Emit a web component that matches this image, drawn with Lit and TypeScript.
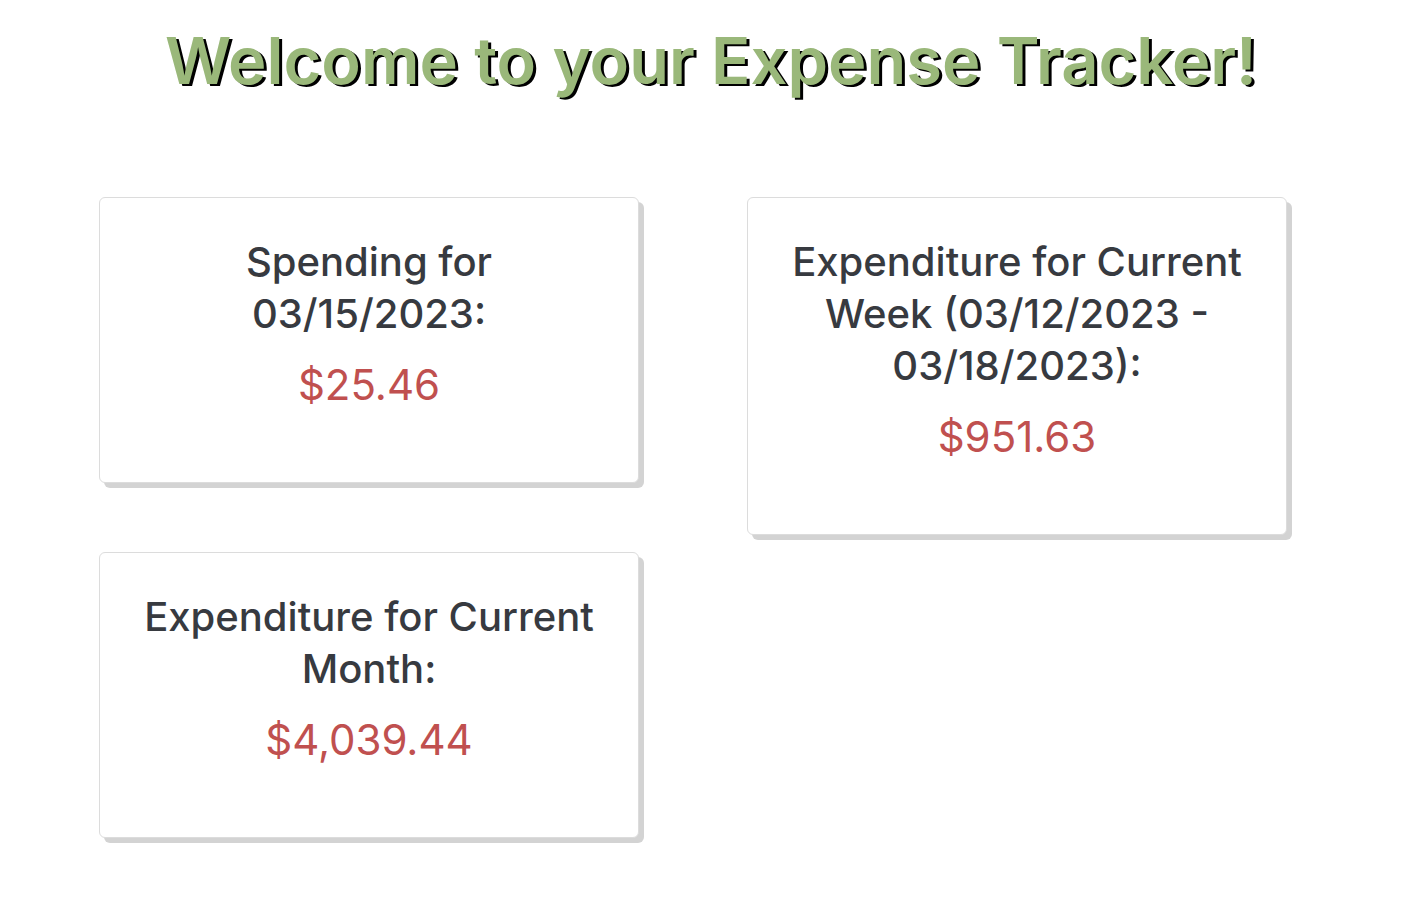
import { LitElement, html, css } from "lit";
import { customElement, property } from "lit/decorators.js";

@customElement("expense-card")
class ExpenseCard extends LitElement {
  @property() label = "";
  @property() amount = "";

  static styles = css`
    :host {
      display: block;
      box-sizing: border-box;
      padding: 38px 40px 72px;
      background: #fff;
      border: 1px solid #dcdcdc;
      border-radius: 6px;
      box-shadow: 5px 5px 0 #d3d3d3;
      text-align: center;
    }
    .label {
      margin: 0;
      color: #373a40;
      font-size: 40px;
      font-weight: 500;
      line-height: 52px;
    }
    .amount {
      margin: 20px 0 0;
      color: #c0504f;
      font-size: 42px;
      line-height: 50px;
    }
  `;

  render() {
    return html`
      <h2 class="label">${this.label}</h2>
      <p class="amount">${this.amount}</p>
    `;
  }
}

@customElement("app-root")
class AppRoot extends LitElement {
  static styles = css`
    :host {
      display: block;
      min-height: 100vh;
      background: #fff;
      font-family: Inter, "Liberation Sans", sans-serif;
    }
    .title {
      margin: 0;
      padding: 17px 0 0 8px;
      color: #9ab87a;
      font-size: 65px;
      font-weight: 600;
      line-height: 88px;
      text-align: center;
      text-shadow: 3px 2px #000;
    }
    .cards {
      display: grid;
      grid-template-columns: 1fr 1fr;
      align-items: start;
      column-gap: 108px;
      padding: 92px 127px 80px 99px;
    }
    .column {
      display: grid;
      gap: 69px;
    }
  `;

  render() {
    return html`
      <h1 class="title">Welcome to your Expense Tracker!</h1>
      <main class="cards">
        <div class="column">
          <expense-card label="Spending for 03/15/2023:" amount="$25.46"></expense-card>
          <expense-card label="Expenditure for Current Month:" amount="$4,039.44"></expense-card>
        </div>
        <expense-card
          label="Expenditure for Current Week (03/12/2023 - 03/18/2023):"
          amount="$951.63"
        ></expense-card>
      </main>
    `;
  }
}
